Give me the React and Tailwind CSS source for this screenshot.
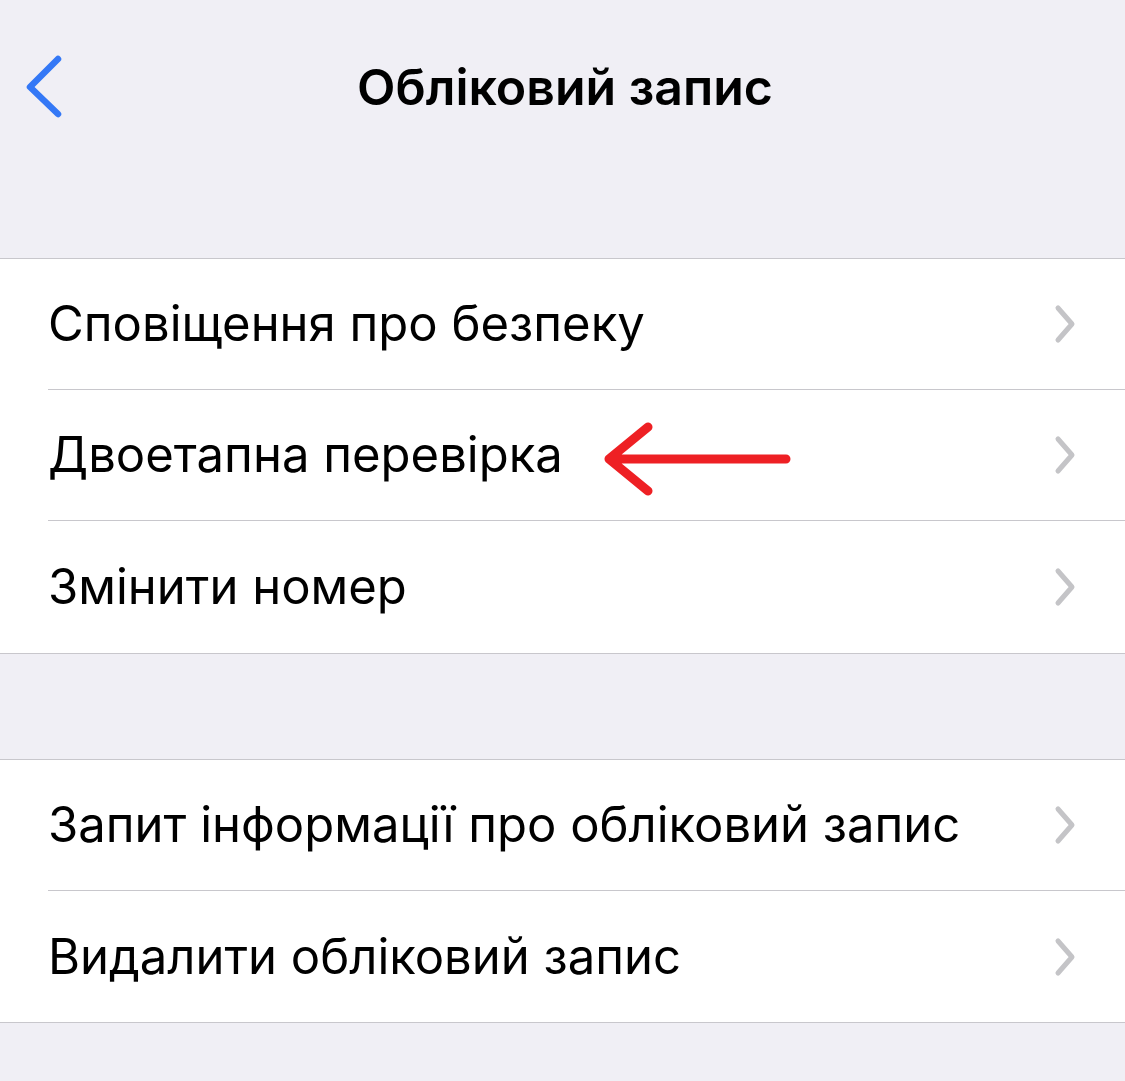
const groups = [
  ["Сповіщення про безпеку", "Двоетапна перевірка", "Змінити номер"],
  ["Запит інформації про обліковий запис", "Видалити обліковий запис"],
];

function Chevron() {
  return (
    <svg width="28" height="44" viewBox="0 0 28 44" className="shrink-0">
      <path d="M6 6 L20 22 L6 38" fill="none" stroke="#c4c4c7" strokeWidth="5" strokeLinecap="round" strokeLinejoin="round" />
    </svg>
  );
}

function Row({ label, last, marked, tall }) {
  return (
    <div className={`relative flex items-stretch pl-12 ${tall ? "h-[132px]" : "h-[131px]"}`}>
      <div className={`flex flex-1 items-center justify-between pr-[45px] ${last ? "" : "border-b border-[#c8c7cc]"}`}>
        <span className="text-[49px] leading-[60px] text-black">{label}</span>
        <Chevron />
      </div>
      {marked && (
        <svg width="200" height="80" viewBox="0 0 200 80" className="absolute left-[597px] top-[28px]">
          <path d="M189 41 L12 41 M51 9 L12 41 L51 73" fill="none" stroke="#ee2024" strokeWidth="9" strokeLinecap="round" strokeLinejoin="round" />
        </svg>
      )}
    </div>
  );
}

export default function App() {
  return (
    <div className="min-h-screen bg-[#f0eff5]" style={{ fontFamily: 'Inter, "Liberation Sans", sans-serif' }}>
      {/* navigation bar */}
      <div className="relative flex h-[175px] items-start justify-center pt-[57px]">
        <svg width="50" height="70" viewBox="0 0 50 70" className="absolute left-[20px] top-[51px]">
          <path d="M38 8 L10 36 L38 63" fill="none" stroke="#3478f6" strokeWidth="6.5" strokeLinecap="round" strokeLinejoin="round" />
        </svg>
        <h1 className="text-[50px] font-semibold leading-[60px] text-black pl-[5px]">Обліковий запис</h1>
      </div>
      <div className="h-[83px]" />

      <div className="border-y border-[#c8c7cc] bg-white">
        {groups[0].map((g, i) => (
          <Row key={g} label={g} last={i === 2} tall={i === 2} marked={i === 1} />
        ))}
      </div>

      <div className="h-[105px]" />

      <div className="border-y border-[#c8c7cc] bg-white">
        {groups[1].map((g, i) => (
          <Row key={g} label={g} last={i === groups[1].length - 1} />
        ))}
      </div>
    </div>
  );
}
